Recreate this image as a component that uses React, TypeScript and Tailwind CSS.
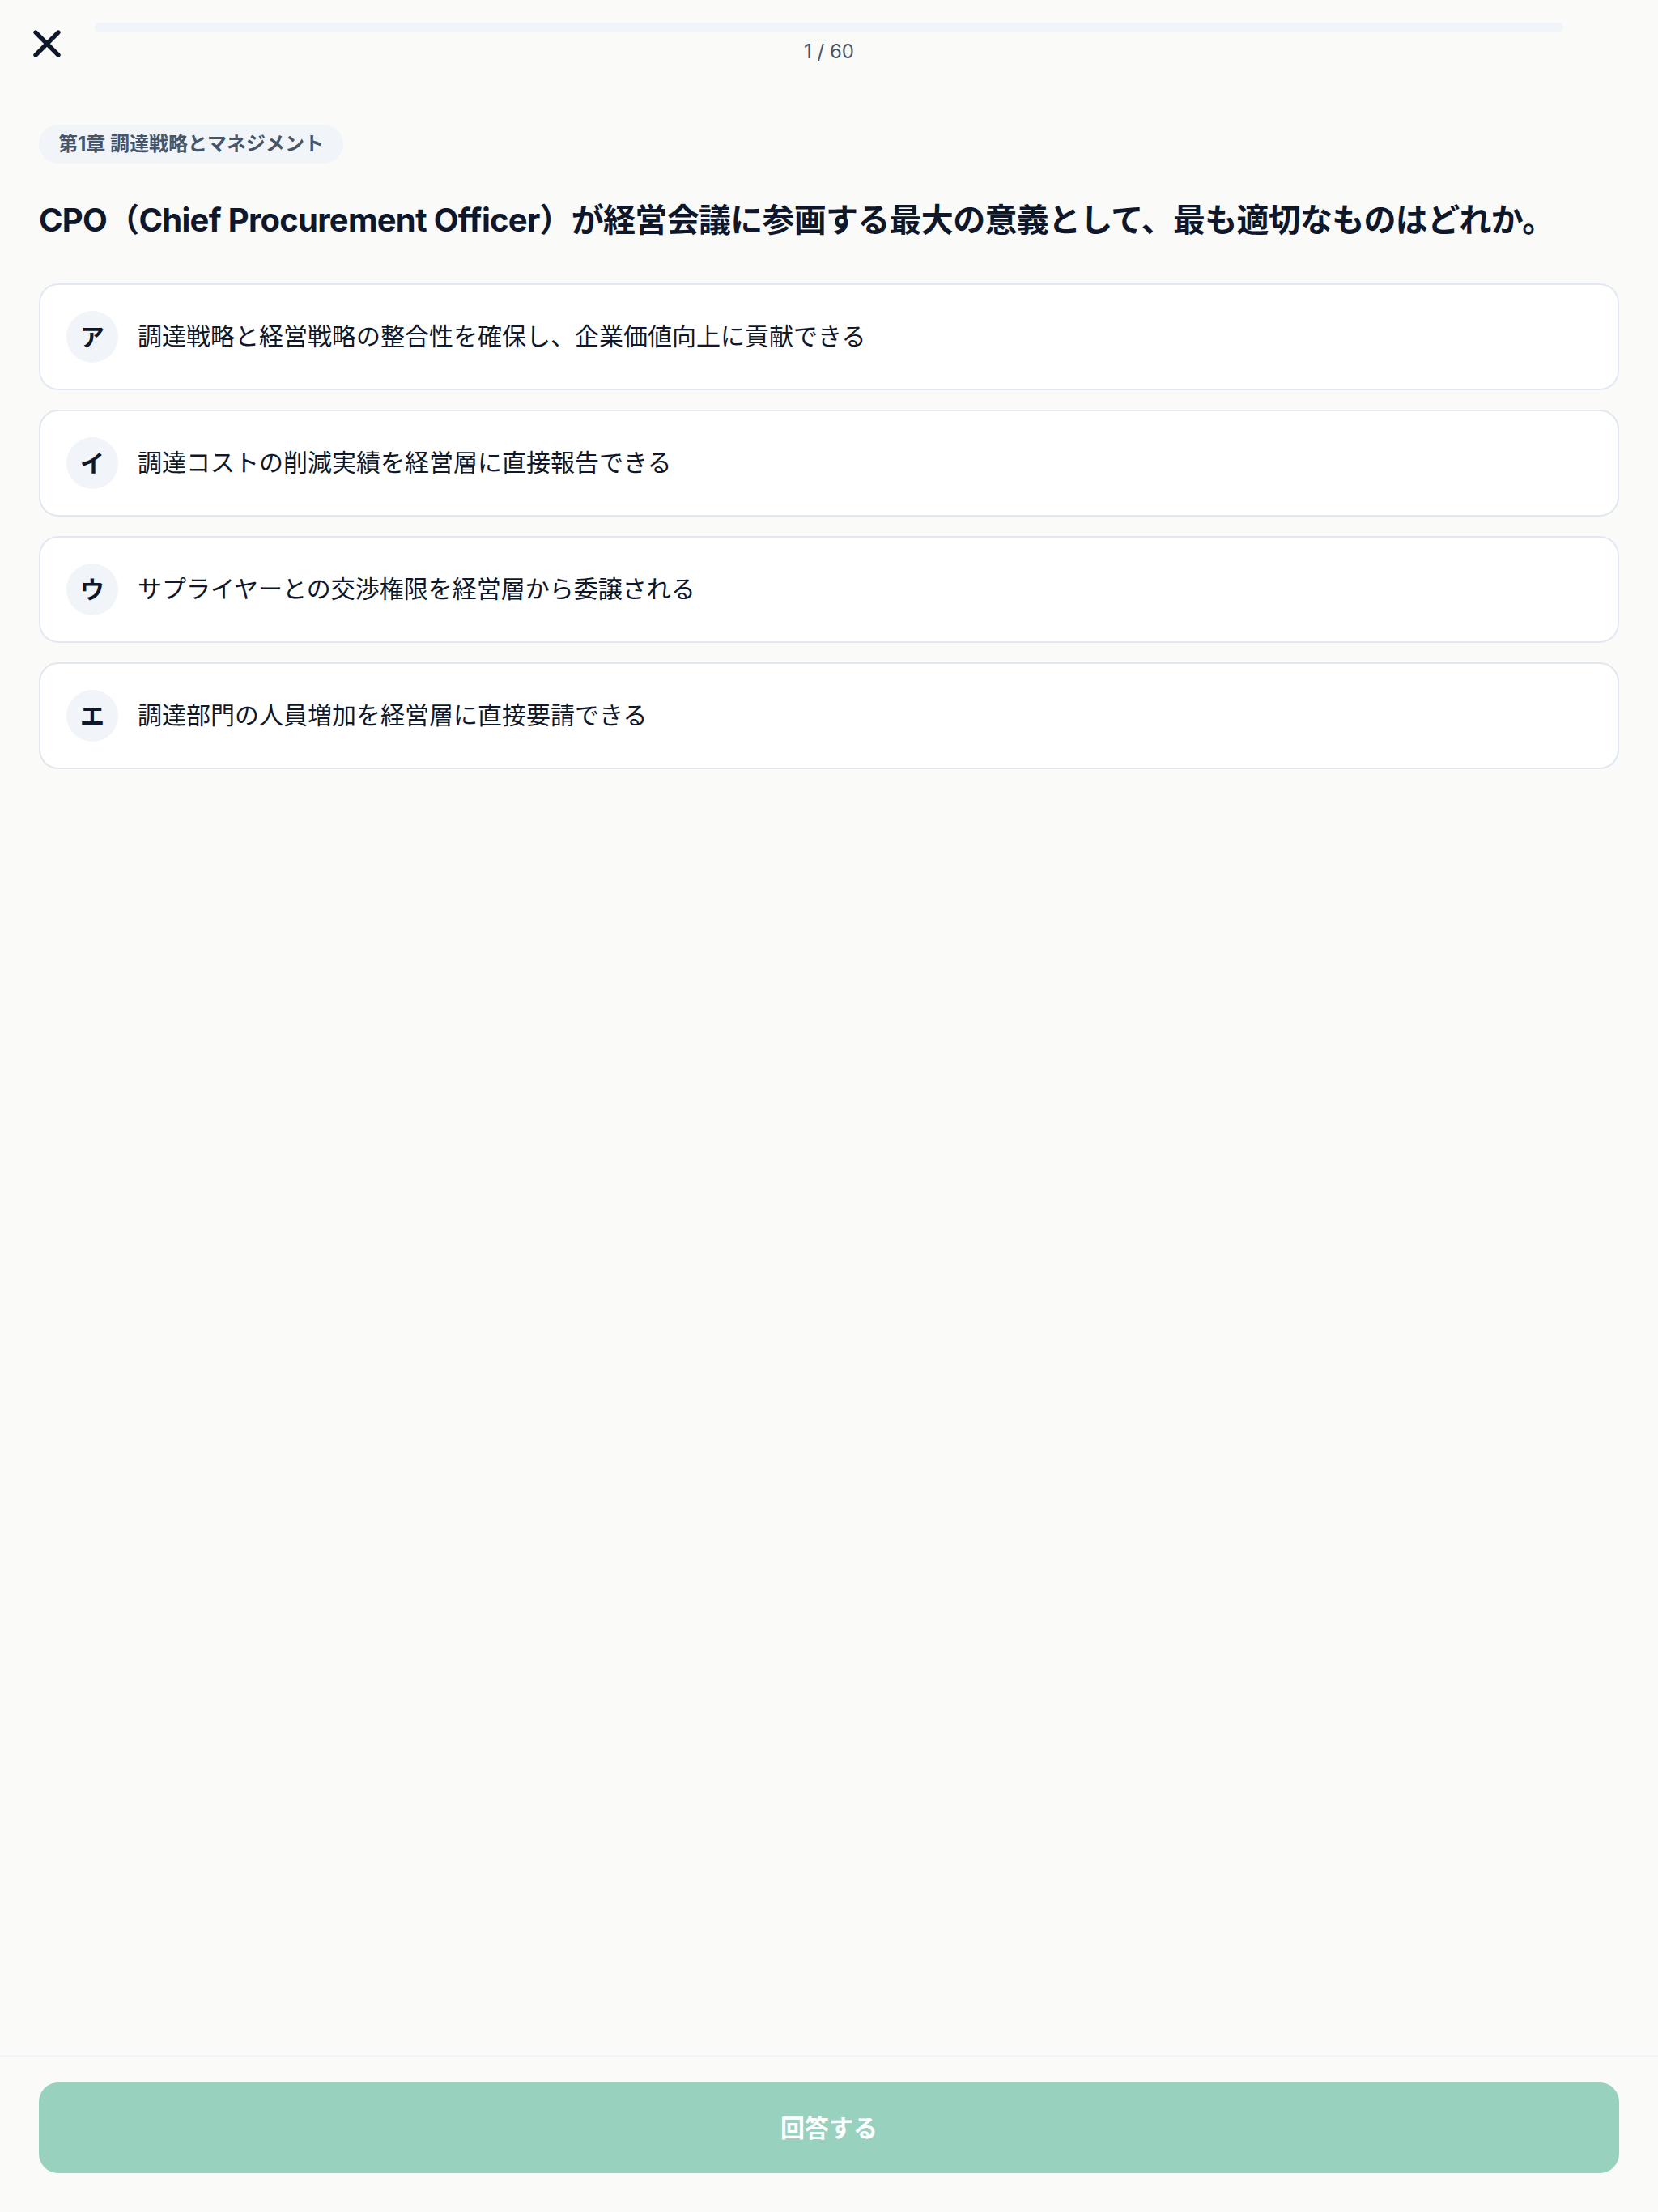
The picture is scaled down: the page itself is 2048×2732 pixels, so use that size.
import { X } from "lucide-react";

const choices = [
  { key: "ア", text: "調達戦略と経営戦略の整合性を確保し、企業価値向上に貢献できる" },
  { key: "イ", text: "調達コストの削減実績を経営層に直接報告できる" },
  { key: "ウ", text: "サプライヤーとの交渉権限を経営層から委譲される" },
  { key: "エ", text: "調達部門の人員増加を経営層に直接要請できる" },
];

const current = 1;
const total = 60;

export default function App() {
  return (
    <div
      className="flex h-[2732px] w-full flex-col bg-[#fafaf9] text-[#0f172a]"
      style={{ fontFamily: 'Inter, "Noto Sans CJK JP", "Noto Sans", sans-serif' }}
    >
      {/* header: close + progress */}
      <header className="flex items-center px-[30px] pt-[26px]">
        <button className="flex h-[56px] w-[56px] items-center justify-center" aria-label="閉じる">
          <X className="h-[56px] w-[56px]" strokeWidth={2.3} color="#0f172a" />
        </button>
        <div className="mx-[31px] flex flex-1 flex-col items-center">
          <div className="h-[12px] w-full overflow-hidden rounded-full bg-[#f1f5f9]">
            <div className="h-full rounded-full bg-[#f1f5f9]" style={{ width: `${(current / total) * 100}%` }} />
          </div>
          <div className="mt-[8px] text-[24px] leading-[32px] text-[#475569]">
            {current} / {total}
          </div>
        </div>
        <div className="w-[56px]" />
      </header>

      <main className="flex-1 px-[48px] pt-[72px]">
        <span className="inline-block rounded-full bg-[#f1f5f9] px-[24px] py-[8px] text-[24px] font-bold leading-[32px] text-[#475569]">
          第1章 調達戦略とマネジメント
        </span>

        <h1 className="mt-[42px] text-[40px] font-bold leading-[56px] tracking-[-0.018em] text-[#0f172a]">
          CPO（Chief Procurement Officer）が経営会議に参画する最大の意義として、最も適切なものはどれか。
        </h1>

        <div className="mt-[50px] flex flex-col gap-[24px]">
          {choices.map((c) => (
            <button
              key={c.key}
              className="flex items-center gap-[24px] rounded-[24px] border-2 border-[#e2e8f0] bg-white px-[32px] py-[32px] text-left"
            >
              <span className="flex h-[64px] w-[64px] shrink-0 items-center justify-center rounded-full bg-[#f1f5f9] text-[30px] font-bold text-[#0f172a]">
                {c.key}
              </span>
              <span className="pb-[3px] text-[30px] leading-[44px] text-[#0f172a]">{c.text}</span>
            </button>
          ))}
        </div>
      </main>

      <footer className="border-t-2 border-[#f1f5f9] px-[48px] pb-[48px] pt-[32px]">
        <button className="flex h-[112px] w-full items-center justify-center rounded-[24px] bg-[#99d1bf] text-[30px] font-bold text-white">
          回答する
        </button>
      </footer>
    </div>
  );
}
